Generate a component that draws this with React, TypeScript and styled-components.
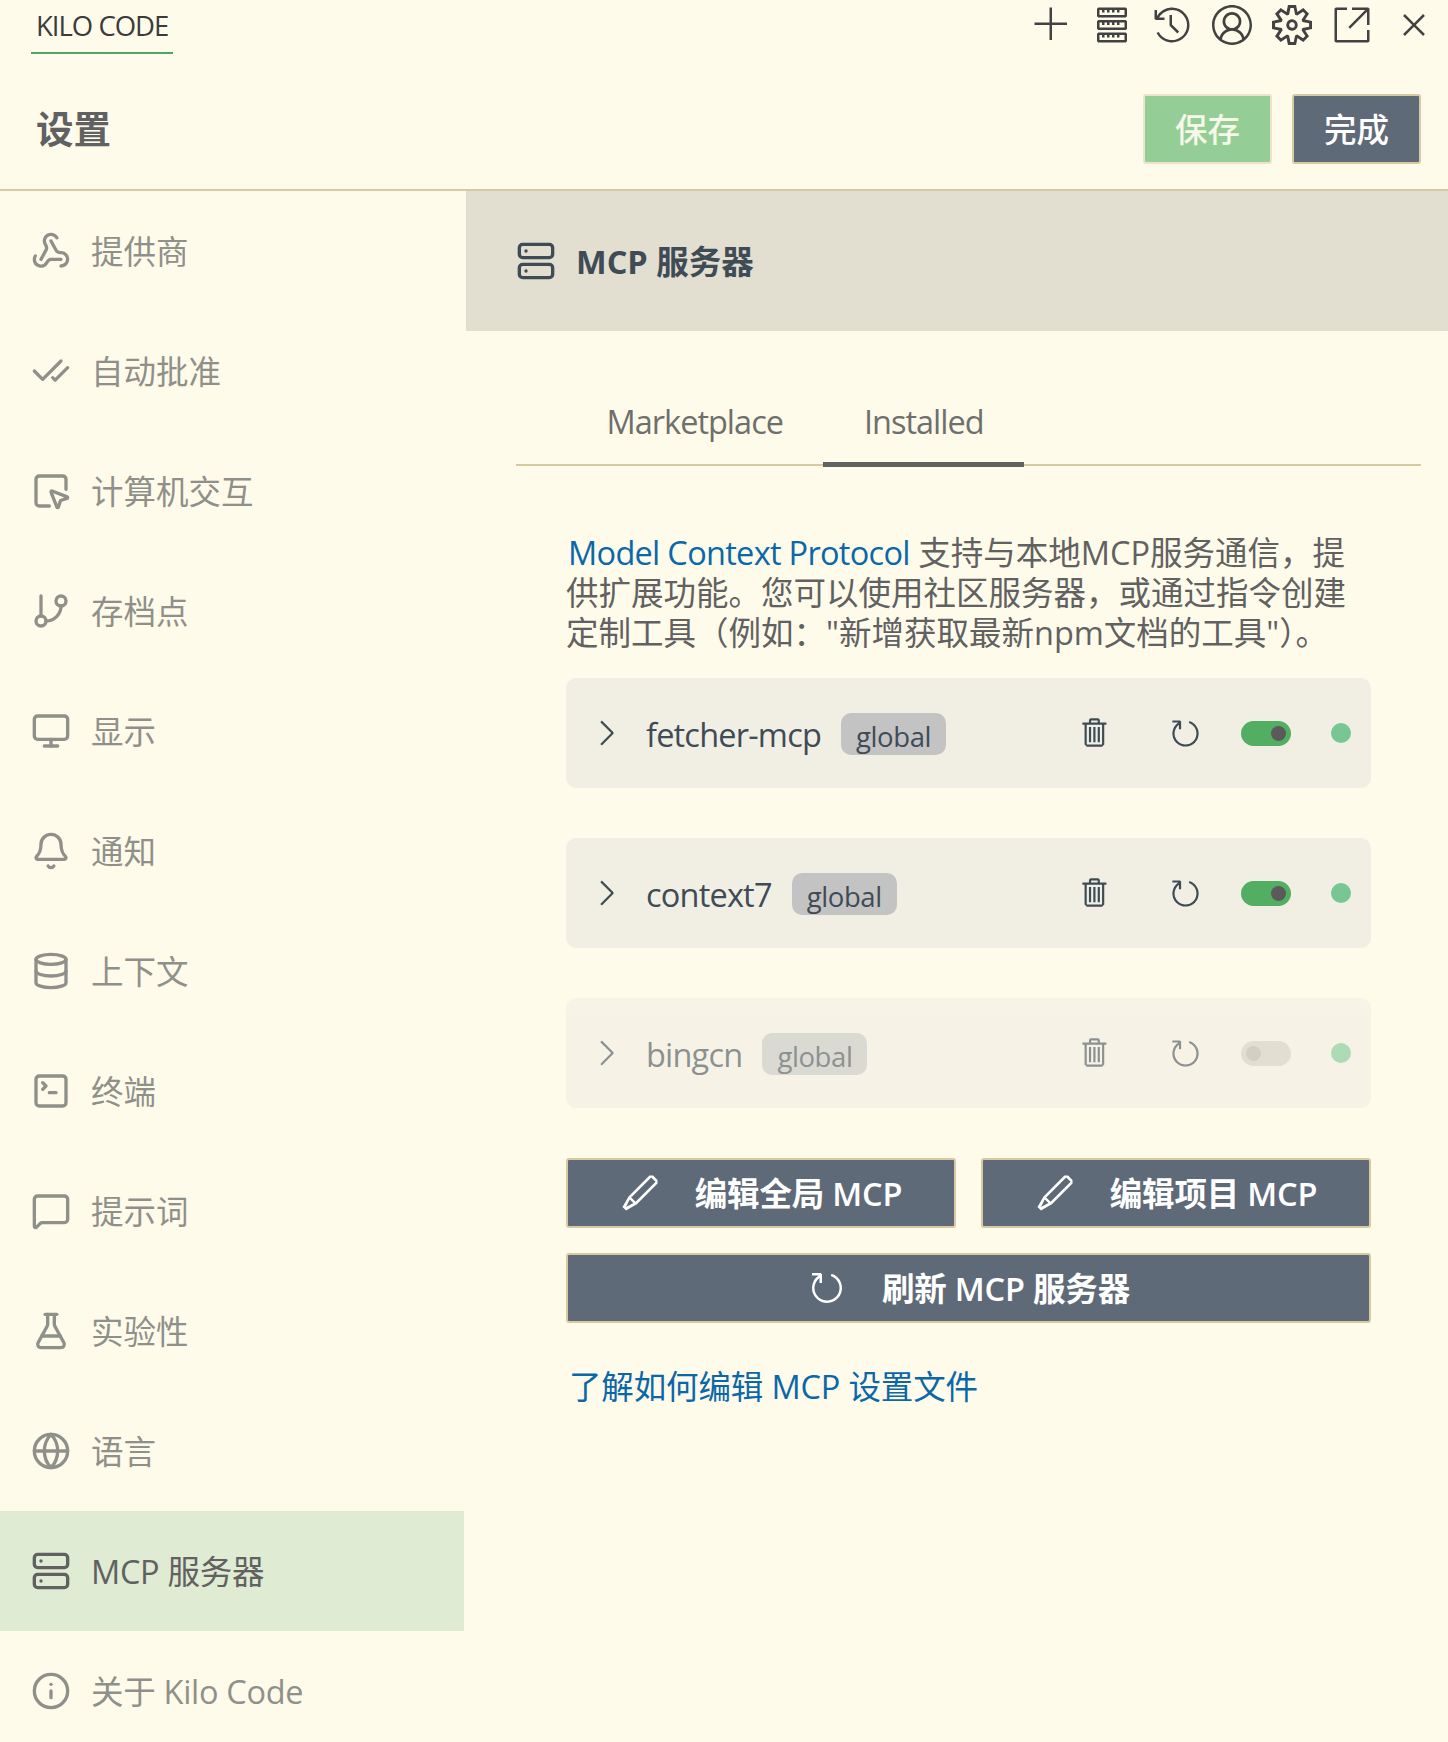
import React from "react";
import styled, { createGlobalStyle } from "styled-components";
import {
  Bell,
  CheckCheck,
  Database,
  FlaskConical,
  GitBranch,
  Globe,
  Info,
  MessageSquare,
  Monitor,
  Server,
  SquareMousePointer,
  SquareTerminal,
  Webhook,
} from "lucide-react";
import {
  VscAccount,
  VscAdd,
  VscChevronRight,
  VscClose,
  VscEdit,
  VscHistory,
  VscLinkExternal,
  VscRefresh,
  VscServer,
  VscSettingsGear,
  VscTrash,
} from "react-icons/vsc";

const GlobalStyle = createGlobalStyle`
  html, body {
    margin: 0;
    padding: 0;
    background: #fffbeb;
  }
  * {
    box-sizing: border-box;
  }
  body {
    font-family: "Open Sans", "Noto Sans CJK SC", sans-serif;
    font-size: 32.5px;
    color: #616161;
  }
`;

const Page = styled.div`
  width: 1448px;
  height: 1742px;
  overflow: hidden;
  background: #fffbeb;
  display: flex;
  flex-direction: column;
`;

const TopBar = styled.div`
  height: 66px;
  flex: none;
  display: flex;
  justify-content: space-between;
  align-items: flex-start;
  padding: 0 14px 0 31px;
`;

const TopTab = styled.div`
  height: 54px;
  padding: 6px 5px 0;
  border-bottom: 2px solid #4aa765;
  font-size: 27.5px;
  line-height: 40px;
  color: #3b3b3b;
  letter-spacing: -1px;
`;

const TopIcons = styled.div`
  display: flex;
  align-items: center;
  gap: 20px;
  padding-top: 5px;
  color: #424242;
`;

const CloseSlot = styled.span`
  display: flex;
  margin-left: 2px;
`;

const Header = styled.header`
  height: 125px;
  flex: none;
  display: flex;
  justify-content: space-between;
  align-items: center;
  padding: 3px 27px 0 36px;
  border-bottom: 2px solid #d8c9a0;
`;

const Title = styled.h1`
  margin: 0;
  font-size: 37.5px;
  line-height: 50px;
  font-weight: 700;
`;

const HeaderActions = styled.div`
  display: flex;
  gap: 20px;
`;

const HeaderButton = styled.button<{ $save?: boolean }>`
  width: 129px;
  height: 70px;
  border-radius: 3px;
  border: 2px solid ${(p) => (p.$save ? "#ece3c8" : "#d8c9a0")};
  background: ${(p) => (p.$save ? "#95cd96" : "#5f6a79")};
  color: ${(p) => (p.$save ? "#f6f8ea" : "#ffffff")};
  font-family: inherit;
  font-size: 32.5px;
  font-weight: 500;
  padding: 0 0 2px;
`;

const Body = styled.div`
  flex: 1;
  display: flex;
  min-height: 0;
`;

const Sidebar = styled.nav`
  width: 466px;
  flex: none;
  padding-right: 2px;
  display: flex;
  flex-direction: column;
`;

const NavItem = styled.div<{ $active?: boolean }>`
  height: 120px;
  flex: none;
  display: flex;
  align-items: center;
  gap: 20px;
  padding-left: 31px;
  background: ${(p) => (p.$active ? "#dfebd3" : "transparent")};
  color: ${(p) => (p.$active ? "#616161" : "#90908a")};
  svg {
    flex: none;
  }
`;

const NavLabel = styled.span<{ $tight?: boolean }>`
  margin-bottom: 2px;
  letter-spacing: ${(p) => (p.$tight ? "-0.3px" : "0")};
`;

const Main = styled.main`
  flex: 1;
  min-width: 0;
`;

const SectionHeader = styled.div`
  height: 140px;
  display: flex;
  align-items: center;
  gap: 20px;
  padding-left: 50px;
  background: #e2dfd0;
  color: #3f4b55;
  font-weight: 700;
`;

const SectionTitle = styled.span`
  margin-bottom: 2px;
`;

const Content = styled.div`
  padding: 0 27px 0 50px;
`;

const TabList = styled.div`
  display: flex;
  height: 135px;
  padding: 41px 0 0 50px;
  border-bottom: 2px solid #d8c9a0;
`;

const Tab = styled.div<{ $active?: boolean }>`
  height: 95px;
  flex: none;
  padding: 25px 40.5px 0;
  line-height: 50px;
  letter-spacing: -1px;
  border-bottom: 5px solid ${(p) => (p.$active ? "#616161" : "transparent")};
  color: #6f6f6b;
`;

const Panel = styled.div`
  padding: 67px 50px 0;
`;

const Intro = styled.p`
  margin: 0 0 25px;
  line-height: 40px;
`;

const TextLink = styled.a<{ $tight?: boolean }>`
  color: #0b68a8;
  text-decoration: none;
  letter-spacing: ${(p) => (p.$tight ? "-0.7px" : "-0.15px")};
  margin-left: ${(p) => (p.$tight ? "2px" : "0")};
`;

const ServerList = styled.div`
  display: flex;
  flex-direction: column;
  gap: 50px;
`;

const ServerCard = styled.div<{ $disabled?: boolean }>`
  height: 110px;
  display: flex;
  align-items: center;
  padding: 0 20px;
  border-radius: 10px;
  background: #f1efe4;
  color: #3f4b55;
  opacity: ${(p) => (p.$disabled ? 0.6 : 1)};
`;

const ServerName = styled.span`
  margin: 3px 0 0 20px;
  letter-spacing: -0.8px;
`;

const Badge = styled.span`
  margin: 2px 0 0 20px;
  height: 42px;
  padding: 0 15px;
  border-radius: 10px;
  background: #c3c3c3;
  font-size: 27.5px;
  line-height: 47px;
  letter-spacing: -0.4px;
`;

const CardActions = styled.div`
  margin-left: auto;
  display: flex;
  align-items: center;
  gap: 38px;
`;

const TrashSlot = styled.span`
  display: flex;
  margin-right: 17px;
`;

const Toggle = styled.span<{ $on?: boolean }>`
  width: 50px;
  height: 25px;
  border-radius: 13px;
  display: flex;
  align-items: center;
  justify-content: ${(p) => (p.$on ? "flex-end" : "flex-start")};
  padding: 0 5px;
  background: ${(p) => (p.$on ? "#52ae62" : "#cfcdc3")};
`;

const Knob = styled.span<{ $on?: boolean }>`
  width: 15px;
  height: 15px;
  border-radius: 50%;
  background: ${(p) => (p.$on ? "#5a5a5a" : "#b5b3ab")};
`;

const StatusDot = styled.span`
  width: 20px;
  height: 20px;
  margin-left: 2px;
  border-radius: 50%;
  background: #78c693;
`;

const ButtonGrid = styled.div`
  margin-top: 50px;
  display: grid;
  grid-template-columns: 1fr 1fr;
  gap: 25px;
`;

const ActionButton = styled.button<{ $wide?: boolean }>`
  height: 70px;
  grid-column: ${(p) => (p.$wide ? "1 / -1" : "auto")};
  display: flex;
  align-items: center;
  justify-content: center;
  gap: 35px;
  border: 2px solid #d8c9a0;
  border-radius: 3px;
  background: #5f6a79;
  color: #fff;
  font-family: inherit;
  font-size: 32.5px;
  font-weight: 600;
  letter-spacing: -0.2px;
  padding: 0;
`;

const ButtonLabel = styled.span`
  margin-bottom: 2px;
`;

const HelpLine = styled.div`
  margin-top: 44px;
  padding-left: 3px;
  line-height: 40px;
`;

const navItems = [
  { label: "提供商", Icon: Webhook },
  { label: "自动批准", Icon: CheckCheck },
  { label: "计算机交互", Icon: SquareMousePointer },
  { label: "存档点", Icon: GitBranch },
  { label: "显示", Icon: Monitor },
  { label: "通知", Icon: Bell },
  { label: "上下文", Icon: Database },
  { label: "终端", Icon: SquareTerminal },
  { label: "提示词", Icon: MessageSquare },
  { label: "实验性", Icon: FlaskConical },
  { label: "语言", Icon: Globe },
  { label: "MCP 服务器", Icon: Server, active: true, tight: true },
  { label: "关于 Kilo Code", Icon: Info, tight: true },
];

const servers = [
  { name: "fetcher-mcp", on: true },
  { name: "context7", on: true },
  { name: "bingcn", on: false },
];

export default function App() {
  return (
    <Page>
      <GlobalStyle />
      <TopBar>
        <TopTab>KILO CODE</TopTab>
        <TopIcons>
          <VscAdd size={40} />
          <VscServer size={40} />
          <VscHistory size={40} />
          <VscAccount size={40} />
          <VscSettingsGear size={40} />
          <VscLinkExternal size={40} />
          <CloseSlot>
            <VscClose size={40} />
          </CloseSlot>
        </TopIcons>
      </TopBar>
      <Header>
        <Title>设置</Title>
        <HeaderActions>
          <HeaderButton $save>保存</HeaderButton>
          <HeaderButton>完成</HeaderButton>
        </HeaderActions>
      </Header>
      <Body>
        <Sidebar>
          {navItems.map(({ label, Icon, active, tight }) => (
            <NavItem key={label} $active={active}>
              <Icon size={40} strokeWidth={2} />
              <NavLabel $tight={tight}>{label}</NavLabel>
            </NavItem>
          ))}
        </Sidebar>
        <Main>
          <SectionHeader>
            <Server size={40} strokeWidth={2} />
            <SectionTitle>MCP 服务器</SectionTitle>
          </SectionHeader>
          <Content>
            <TabList>
              <Tab>Marketplace</Tab>
              <Tab $active>Installed</Tab>
            </TabList>
            <Panel>
              <Intro>
                <TextLink $tight>Model Context Protocol</TextLink> 支持与本地MCP服务通信，提供扩展功能。您可以使用社区服务器，或通过指令创建定制工具（例如："新增获取最新npm文档的工具"）。
              </Intro>
              <ServerList>
                {servers.map((s) => (
                  <ServerCard key={s.name} $disabled={!s.on}>
                    <VscChevronRight size={40} />
                    <ServerName>{s.name}</ServerName>
                    <Badge>global</Badge>
                    <CardActions>
                      <TrashSlot>
                        <VscTrash size={35} />
                      </TrashSlot>
                      <VscRefresh size={35} />
                      <Toggle $on={s.on}>
                        <Knob $on={s.on} />
                      </Toggle>
                      <StatusDot />
                    </CardActions>
                  </ServerCard>
                ))}
              </ServerList>
              <ButtonGrid>
                <ActionButton>
                  <VscEdit size={40} />
                  <ButtonLabel>编辑全局 MCP</ButtonLabel>
                </ActionButton>
                <ActionButton>
                  <VscEdit size={40} />
                  <ButtonLabel>编辑项目 MCP</ButtonLabel>
                </ActionButton>
                <ActionButton $wide>
                  <VscRefresh size={40} />
                  <ButtonLabel>刷新 MCP 服务器</ButtonLabel>
                </ActionButton>
              </ButtonGrid>
              <HelpLine>
                <TextLink>了解如何编辑 MCP 设置文件</TextLink>
              </HelpLine>
            </Panel>
          </Content>
        </Main>
      </Body>
    </Page>
  );
}
